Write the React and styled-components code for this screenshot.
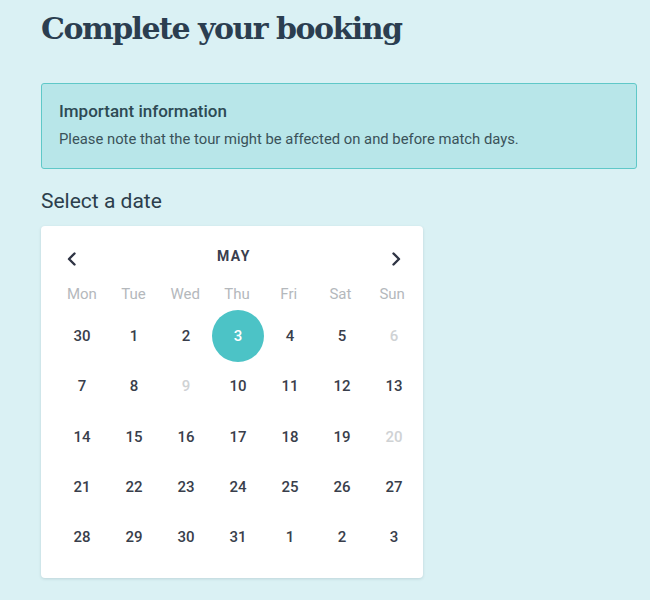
import React from "react";
import styled, { createGlobalStyle } from "styled-components";

const Global = createGlobalStyle`
  html, body { margin: 0; padding: 0; background: #daf1f4; }
  body { font-family: Roboto, "Noto Sans", sans-serif; color: #2c3e50; }
`;

const Page = styled.div`
  padding: 8px 13px 20px 41px;
  display: flex;
  flex-direction: column;
`;

const Title = styled.h1`
  margin: 0;
  font-family: "DejaVu Serif", serif;
  font-weight: 700;
  font-size: 30px;
  letter-spacing: -1.5px;
  line-height: 42px;
  color: #2b3e50;
`;

const Info = styled.div`
  margin-top: 33px;
  background: #b8e6e9;
  border: 1px solid #5fc8c8;
  border-radius: 3px;
  padding: 17px 17px 19px 17px;
  display: flex;
  flex-direction: column;
  gap: 7px;
`;

const InfoTitle = styled.div`
  font-size: 17px;
  font-weight: 500;
  line-height: 21px;
  color: #2d4a54;
`;

const InfoText = styled.div`
  font-size: 14.8px;
  line-height: 20px;
  color: #3a5259;
`;

const Label = styled.div`
  margin-top: 19px;
  font-size: 21px;
  line-height: 26px;
  color: #2c3e4c;
`;

const Card = styled.div`
  margin-top: 12px;
  width: 382px;
  box-sizing: border-box;
  background: #fff;
  border-radius: 4px;
  box-shadow: 0 1px 3px rgba(60, 90, 100, 0.18);
  padding: 15px 5px 16px 15px;
`;

const Header = styled.div`
  display: flex;
  align-items: center;
  justify-content: space-between;
  height: 30px;
  padding: 0 12px 0 6px;
`;

const Month = styled.div`
  font-size: 14px;
  font-weight: 700;
  letter-spacing: 1.5px;
  color: #3a3f4e;
`;

const Arrow = styled.button`
  border: 0;
  background: none;
  padding: 0;
  width: 20px;
  height: 20px;
  display: flex;
  align-items: center;
  justify-content: center;
  margin-top: 5px;
  cursor: pointer;
`;

const Grid = styled.div`
  display: grid;
  grid-template-columns: repeat(7, 1fr);
  grid-auto-rows: 50.3px;
  align-items: center;
  justify-items: center;
`;

const WeekRow = styled(Grid)`
  grid-auto-rows: 24px;
  margin-top: 11px;
  margin-bottom: 5px;
`;

const Weekday = styled.div`
  font-size: 15px;
  color: #b4b8bc;
`;

const Day = styled.div`
  width: 52px;
  height: 52px;
  border-radius: 50%;
  display: flex;
  align-items: center;
  justify-content: center;
  font-size: 15px;
  font-weight: 500;
  color: ${(p) => (p.$selected ? "#fff" : p.$disabled ? "#cfd2d4" : "#393e4b")};
  background: ${(p) => (p.$selected ? "#4cc3c6" : "transparent")};
`;

const Chevron = ({ dir }) => (
  <svg width="12" height="14" viewBox="0 0 12 14">
    <path
      d={dir === "left" ? "M8.5 1.5 L3 7 L8.5 12.5" : "M3.5 1.5 L9 7 L3.5 12.5"}
      fill="none"
      stroke="#2f3444"
      strokeWidth="2.4"
      strokeLinecap="round"
      strokeLinejoin="round"
    />
  </svg>
);

const weekdays = ["Mon", "Tue", "Wed", "Thu", "Fri", "Sat", "Sun"];
const days = [
  30, 1, 2, 3, 4, 5, 6,
  7, 8, 9, 10, 11, 12, 13,
  14, 15, 16, 17, 18, 19, 20,
  21, 22, 23, 24, 25, 26, 27,
  28, 29, 30, 31, 1, 2, 3,
];
const disabledIdx = new Set([6, 9, 20]);
const selectedIdx = 3;

export default function App() {
  return (
    <>
      <Global />
      <Page>
        <Title>Complete your booking</Title>
        <Info>
          <InfoTitle>Important information</InfoTitle>
          <InfoText>Please note that the tour might be affected on and before match days.</InfoText>
        </Info>
        <Label>Select a date</Label>
        <Card>
          <Header>
            <Arrow aria-label="Previous month"><Chevron dir="left" /></Arrow>
            <Month>MAY</Month>
            <Arrow aria-label="Next month"><Chevron dir="right" /></Arrow>
          </Header>
          <WeekRow>
            {weekdays.map((w) => (
              <Weekday key={w}>{w}</Weekday>
            ))}
          </WeekRow>
          <Grid>
            {days.map((d, i) => (
              <Day key={i} $selected={i === selectedIdx} $disabled={disabledIdx.has(i)}>
                {d}
              </Day>
            ))}
          </Grid>
        </Card>
      </Page>
    </>
  );
}
